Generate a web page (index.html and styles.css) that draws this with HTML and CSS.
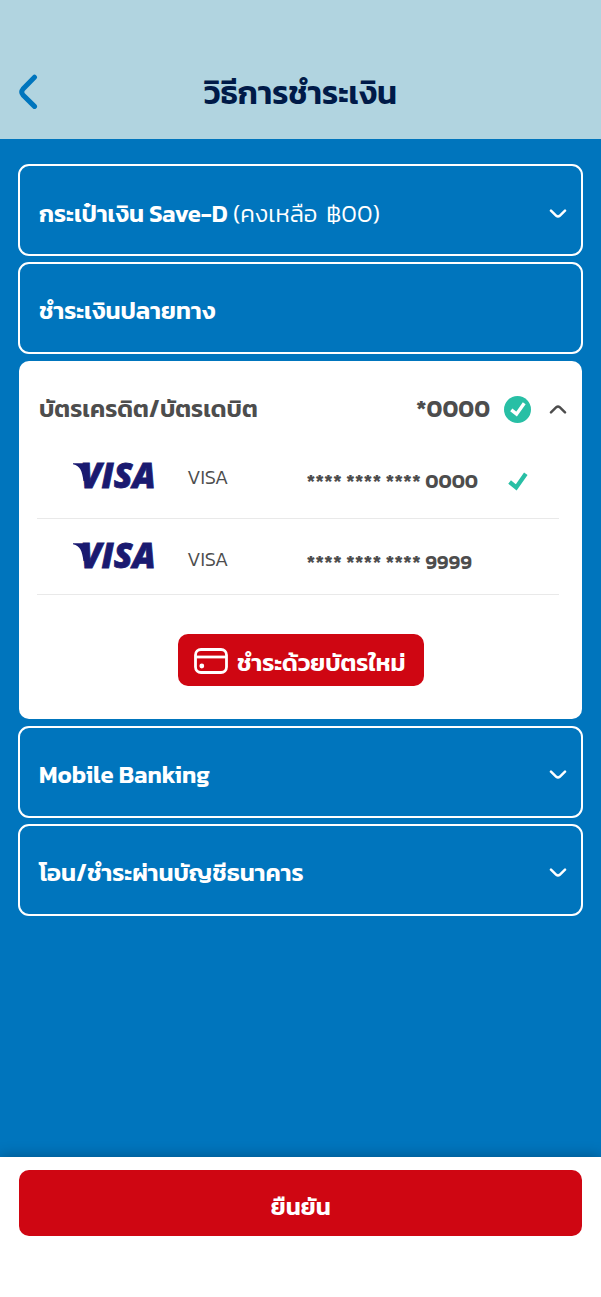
FILE: index.html
```html
<!DOCTYPE html>
<html lang="th">
<head>
<meta charset="utf-8">
<title>วิธีการชำระเงิน</title>
<link rel="stylesheet" href="styles.css">
</head>
<body>
<svg class="defs" aria-hidden="true">
  <symbol id="chevron" viewBox="0 0 18 10"><path d="M2 1.7 L7.3 6.8 Q9 8.3 10.700 6.800 L16 1.700" fill="none" stroke="currentColor" stroke-width="2.500" stroke-linecap="round"/></symbol>
  <symbol id="check" viewBox="0 0 20 20"><path d="M1.600 11 L8.200 16.400 L17.800 2.800" fill="none" stroke="currentColor" stroke-width="4.300"/></symbol>
</svg>
<div class="screen">
  <header class="header">
    <svg class="back" viewBox="0 0 20 36"><path d="M15.500 3.200 L4 15 Q1.500 18 4 21 L15.500 32.400" fill="none" stroke="currentColor" stroke-width="5" stroke-linecap="round"/></svg>
    <h1 class="title">วิธีการชำระเงิน</h1>
  </header>
  <main class="methods">
    <section class="method wallet">
      <p class="label"><span>กระเป๋าเงิน Save-D</span> <span class="balance">(คงเหลือ ฿00)</span></p>
      <svg class="chevron"><use href="#chevron"/></svg>
    </section>
    <section class="method"><p class="label">ชำระเงินปลายทาง</p></section>
    <section class="panel">
      <div class="panel-head">
        <p class="label">บัตรเครดิต/บัตรเดบิต</p>
        <span class="last-digits">*0000</span>
        <span class="badge"><svg class="badge-check"><use href="#check"/></svg></span>
        <svg class="chevron up"><use href="#chevron"/></svg>
      </div>
      <div class="card-row first">
        <svg class="visa" viewBox="0 0 82 30"><path d="M0 2.200 H13 L17 20 L10.500 20 C9 10 7.500 4.800 0 3.200 Z" fill="currentColor"/><text class="visa-word" x="7.500" y="27" textLength="75" lengthAdjust="spacingAndGlyphs">VISA</text></svg>
        <span class="brand">VISA</span>
        <span class="number"><span>**** **** ****</span><span>0000</span></span>
        <svg class="check"><use href="#check"/></svg>
      </div>
      <div class="card-row second">
        <svg class="visa" viewBox="0 0 82 30"><path d="M0 2.200 H13 L17 20 L10.500 20 C9 10 7.500 4.800 0 3.200 Z" fill="currentColor"/><text class="visa-word" x="7.500" y="27" textLength="75" lengthAdjust="spacingAndGlyphs">VISA</text></svg>
        <span class="brand">VISA</span>
        <span class="number"><span>**** **** ****</span><span>9999</span></span>
      </div>
      <button class="new-card">
        <svg class="card-icon" viewBox="0 0 34 26"><rect x="1.500" y="1.500" width="31" height="23" rx="5.500" fill="none" stroke="currentColor" stroke-width="2.800"/><path d="M2 9 H32" stroke="currentColor" stroke-width="2.800"/><circle cx="7.800" cy="18" r="2.400" fill="currentColor"/></svg>
        <span class="new-card-text">ชำระด้วยบัตรใหม่</span>
      </button>
    </section>
    <section class="method">
      <p class="label">Mobile Banking</p>
      <svg class="chevron"><use href="#chevron"/></svg>
    </section>
    <section class="method">
      <p class="label">โอน/ชำระผ่านบัญชีธนาคาร</p>
      <svg class="chevron"><use href="#chevron"/></svg>
    </section>
  </main>
  <footer class="footer"><button class="confirm"><span class="confirm-text">ยืนยัน</span></button></footer>
</div>
</body>
</html>
```
FILE: styles.css
```css
* { box-sizing: border-box; }
body { margin: 0; font-family: Kanit, "Noto Sans Thai", "Noto Sans", sans-serif; }
p, h1 { margin: 0; }
button { border: 0; color: #fff; font-family: inherit; background: #cf0612; }
svg { display: block; flex: none; }
.defs { position: absolute; width: 0; height: 0; }
.screen { display: flex; flex-direction: column; width: 601px; height: 1297px; background: #0075bd; overflow: hidden; }
.header { display: grid; grid-template-columns: 60px 1fr 60px; align-items: center; height: 139px; padding-top: 45px; background: #b1d4e0; color: #001a48; }
.back { width: 20px; height: 36px; margin-left: 19px; color: #0075bd; }
.title { grid-column: 2; padding-top: 2px; text-align: center; font-size: 32px; line-height: 44px; font-weight: 600; white-space: nowrap; }
.methods { flex: 1; display: flex; flex-direction: column; gap: 6px; padding: 25px 18px 0; }
.method { display: flex; align-items: center; justify-content: space-between; height: 92px; padding: 6px 14px 0 19px; border: 2px solid #fff; border-radius: 11px; color: #fff; }
.wallet { padding-top: 8px; }
.label { font-size: 24px; line-height: 32px; font-weight: 600; white-space: nowrap; }
.balance { font-weight: 300; word-spacing: 3.500px; }
.chevron { width: 18px; height: 10px; }
.up { transform: scaleY(-1); }
.panel { height: 357.5px; margin: 1px; border-radius: 10px; background: #fff; color: #4d4d4d; }
.panel-head { display: grid; grid-template-columns: 377px 88px 45px 18px; align-items: center; height: 80px; padding: 16px 0 0 20px; }
.last-digits { font-size: 24px; font-weight: 600; line-height: 32px; }
.badge { display: grid; place-items: center; width: 27px; height: 27px; border-radius: 50%; background: #28bfa5; color: #fff; }
.badge-check { width: 16px; height: 16px; }
.card-row { display: grid; grid-template-columns: 115px 118.500px 201px 1fr; align-items: start; width: 522px; margin-left: 18px; padding-left: 36px; border-bottom: 1.500px solid #e9e9e9; }
.first { height: 78px; }
.second { height: 76px; }
.visa { width: 82px; height: 30px; margin-top: 20px; color: #1a1a70; overflow: visible; }
.second .visa { margin-top: 22px; }
.visa-word { font: italic 800 34.500px "Open Sans", sans-serif; fill: currentColor; stroke: currentColor; stroke-width: .8px; }
.brand { margin: 23px 0 0 -1px; font-size: 20px; line-height: 26px; font-weight: 300; }
.second .brand { margin-top: 27px; }
.number { display: flex; gap: 4.500px; margin-top: 27px; font-size: 20px; line-height: 26px; font-weight: 600; white-space: nowrap; }
.second .number { margin-top: 30px; }
.check { width: 20px; height: 20px; margin-top: 30px; color: #28bfa5; }
.new-card { display: flex; align-items: center; gap: 9px; width: 246px; height: 52px; margin: 39px 0 0 159px; padding: 1px 0 0 16px; border-radius: 10px; }
.card-icon { width: 34px; height: 26px; }
.new-card-text { padding-top: 4px; font-size: 24px; line-height: 32px; font-weight: 600; white-space: nowrap; }
.footer { height: 140px; padding: 12.500px 18.500px; background: #fff; box-shadow: 0 0 14px rgba(0, 0, 0, .3); }
.confirm { display: block; width: 563.500px; height: 66.500px; padding: 8px 0 0 1px; border-radius: 10px; }
.confirm-text { font-size: 24px; line-height: 32px; font-weight: 600; }
```
